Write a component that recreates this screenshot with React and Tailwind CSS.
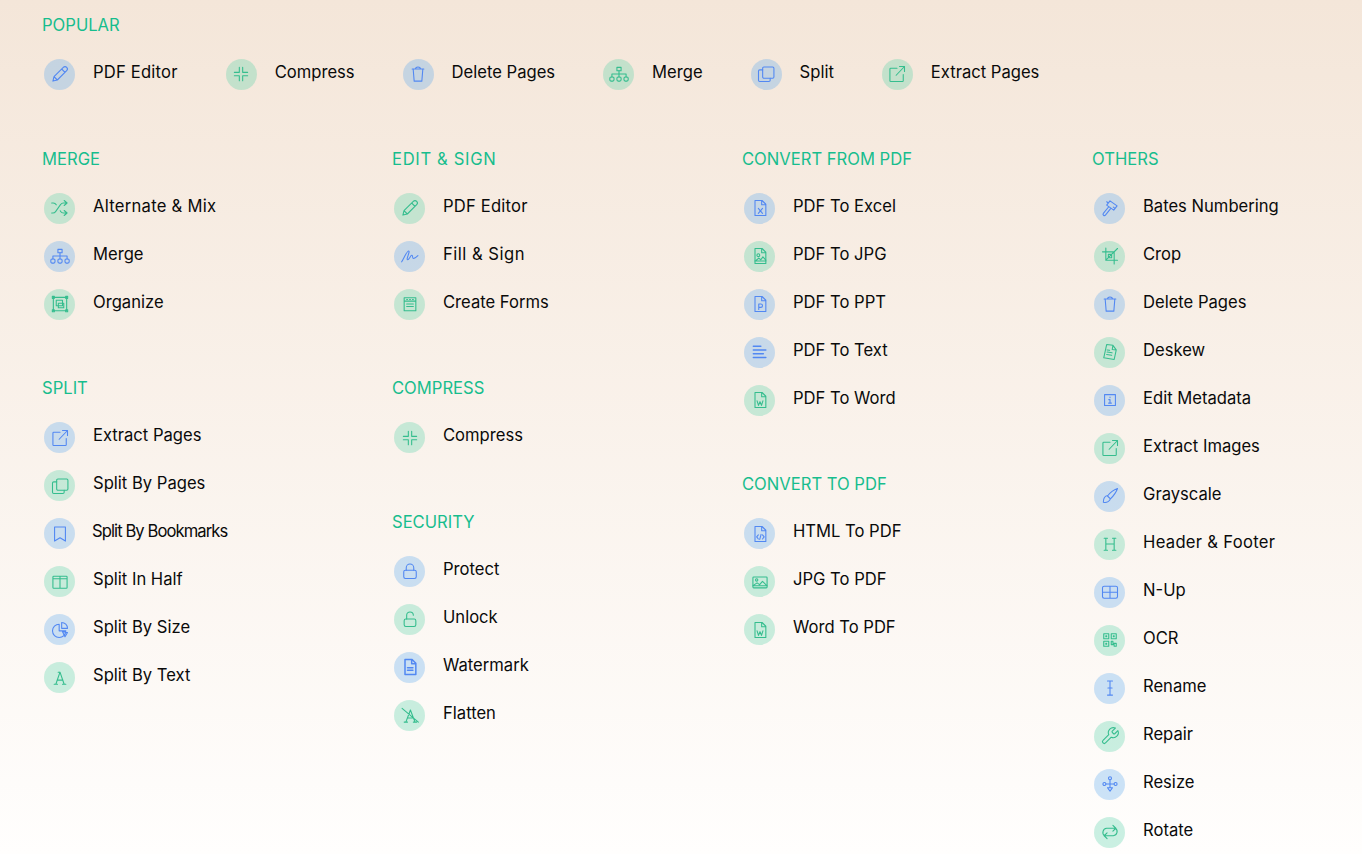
import React from "react";

const doc = "M6 3h8.500L19 7.500V21H6z M14 3v5h5";
const P = {
  pencil: <path d="M3.500 20.500 4.800 15.200 16 4a2.500 2.500 0 0 1 4 4L8.800 19.200z M14 6l4 4 M4.800 15.200 8.800 19.200" />,
  compress: <path d="M10 4v6H4 M14 4v6h6 M10 20v-6H4 M14 20v-6h6" />,
  trash: <path d="M5 6h14 M9 6c0-1.500.5-2.500 3-2.500S15 4.500 15 6 M6.200 6l1.200 14.500h9.200L17.800 6" />,
  tree: <><rect x="9.500" y="4" width="5" height="4" /><path d="M12 8v7.500 M3.500 15.500V12h17v3.500" /><rect x="1" y="15.500" width="5" height="5" rx="1.500" /><rect x="9.500" y="15.500" width="5" height="5" rx="1.500" /><rect x="18" y="15.500" width="5" height="5" rx="1.500" /></>,
  copy: <><rect x="8" y="3.500" width="13.500" height="13.500" rx="1.500" /><path d="M8 7H4.500A1.500 1.500 0 0 0 3 8.500v11A1.500 1.500 0 0 0 4.500 21h11a1.500 1.500 0 0 0 1.500-1.500V17" /></>,
  extract: <path d="M12 5H4.500a1 1 0 0 0-1 1v14a1 1 0 0 0 1 1h14a1 1 0 0 0 1-1v-7.500 M11 13.500 21 3 M15 3h6v6" />,
  shuffle: <path d="M2 18h1.400c1.300 0 2.500-.6 3.300-1.700l6.100-8.600c.7-1.100 2-1.700 3.300-1.700H20 M17 3l3.500 3L17 9 M2 6h1.900c1.500 0 2.900.9 3.600 2.200 M20 18h-3.900c-1.300 0-2.600-.7-3.300-1.800l-.5-.8 M17 15l3.500 3-3.500 3" />,
  organize: <><rect x="4" y="4" width="16" height="16" /><rect x="7.500" y="7.500" width="7.500" height="6.500" /><rect x="10" y="11" width="6.500" height="5.500" /><rect x="2.800" y="2.800" width="2.400" height="2.400" /><rect x="18.800" y="2.800" width="2.400" height="2.400" /><rect x="2.800" y="18.800" width="2.400" height="2.400" /><rect x="18.800" y="18.800" width="2.400" height="2.400" /></>,
  bookmark: <path d="M5.500 3.500h13v17l-6.500-4-6.500 4z" />,
  half: <path d="M4.500 5h15a1 1 0 0 1 1 1v12.500a1 1 0 0 1-1 1h-15a1 1 0 0 1-1-1V6a1 1 0 0 1 1-1z M3.500 8h17 M12 5v14.500" />,
  pie: <path d="M11 5a8 8 0 1 0 8 8h-8z M14 3a7 7 0 0 1 7 7h-7z M15 14l6 1-3 5z" />,
  letterA: <path d="M7 19.500 12 5l5 14.500 M8.500 14.500h7 M5 19.500h4 M15 19.500h4 M9.800 5H12" />,
  sign: <path d="M2 19C5 14 8.500 5.500 10.500 6c2 .5-3.500 10-1.500 10.500 2 .4 3.500-5.500 5.200-5.300 1.600.2.300 3.800 2 3.800 1.500 0 3.200-1.500 5.300-3.500" />,
  forms: <path d="M5 4.500h14v15.500H5z M5 8.500h14 M8 12h8 M8 15h8 M8 6.500h1 M11.500 6.500h1 M15 6.500h1" />,
  lock: <><rect x="4.500" y="11" width="15" height="10" rx="2" /><path d="M7.500 11V8a4.500 4.500 0 0 1 9 0v3" /></>,
  unlock: <><rect x="5" y="12" width="14" height="9" rx="2" /><path d="M8 12V7.500a4 4 0 0 1 8 0" /></>,
  watermark: <path d={doc + " M9 13h6.500 M9 16h6.500"} strokeWidth="1.800" />,
  flatten: <path d="M7 20.500 12.500 6 18 20.500 M9 15.500h7.500 M5 20.500h4 M16 20.500h4 M2.500 4 22 20.500" />,
  excel: <path d={doc + " M10 12.500l5 6 M15 12.500l-5 6"} />,
  jpgdoc: <><path d={doc} /><circle cx="10" cy="11" r="1.700" /><path d="M6.500 18l4-3.500 2.500 2 2.500-3.500 3.500 4 M6 18h13" /></>,
  ppt: <path d={doc + " M10.500 18.500v-6.500h2.500a2 2 0 0 1 0 4h-2.500"} />,
  text: <path d="M4 5h9 M4 9.500h15 M4 14h12 M4 18.500h15" strokeWidth="1.800" />,
  word: <path d={doc + " M8.500 13l1.700 5.500 1.800-4.500 1.800 4.500 1.700-5.500"} />,
  html: <path d={doc + " M10 13l-2 2.500 2 2.500 M15 13l2 2.500-2 2.500 M13.300 12.500l-1.600 6"} />,
  picture: <><rect x="3.500" y="6" width="17" height="13" rx="1" /><circle cx="8" cy="9.500" r="1.400" /><path d="M4 16l4.500-3 3 2.200 3.500-4 5 4.800 M3.500 16.500h17" /></>,
  stamp: <path d="M12 3.500l8.500 6-4 5-8.500-6z M10.500 10.500 4 18.500a1.500 1.500 0 0 0 2.500 2l6-7.500 M8 4.500l2 1.500 M16 11l2 1.500" />,
  crop: <path d="M7 2.500V17h14 M3 7h14v14.500 M21 3 7 17 M10 10h4v4h-4z" />,
  deskew: <path d="M8 3l7.500 1 4 5.500L17 21 4.500 19z M15.500 4l-.8 5 4.800.5 M8.500 12l6 1 M8 15l6 1 M8.500 9.500l3 .5" />,
  info: <path d="M5.500 5.500h13v13h-13z M12 8.500v.6 M10.500 11.500H12v4 M10.300 15.700h3.400" />,
  brush: <path d="M21 3c-4.500 1.500-9 5-12 9l3.500 3.500c3.500-3.500 7-8 8.500-12.500z M9.300 11.500C6 12 4 15 4 19.500 8.500 20.500 12 18 12.500 15" />,
  header: <path d="M7 5v14.500 M17 5v14.500 M7 12h10 M5 5h4 M15 5h4 M5 19.500h4 M15 19.500h4" />,
  grid: <path d="M5 5h14a2 2 0 0 1 2 2v10.500a2 2 0 0 1-2 2H5a2 2 0 0 1-2-2V7a2 2 0 0 1 2-2z M3 12.200h18 M12 5v14.500" />,
  qr: <><rect x="4.500" y="4.500" width="6" height="6" /><rect x="13.500" y="4.500" width="6" height="6" /><rect x="4.500" y="13.500" width="6" height="6" /><path d="M7 7h1v1H7z M16 7h1v1h-1z M7 16h1v1H7z M13.500 13.500h2v2.500h4v3.500h-2.500v-2h-3.500z" /></>,
  rename: <path d="M9 3.500h6 M12 3.500v17 M9 20.500h6 M9.500 12h5" />,
  wrench: <path d="M14.700 6.300a1 1 0 0 0 0 1.400l1.600 1.600a1 1 0 0 0 1.400 0l3.770-3.770a6 6 0 0 1-7.940 7.940l-6.910 6.910a2.120 2.120 0 0 1-3-3l6.910-6.910a6 6 0 0 1 7.940-7.940l-3.760 3.760z" />,
  move: <><circle cx="12" cy="5" r="1.800" /><circle cx="5.300" cy="12" r="1.800" /><circle cx="18.700" cy="12" r="1.800" /><path d="M12 6.800v9.700 M7.100 12h9.800 M9 16.500h6L12 20.500z" /></>,
  rotate: <path d="M5.500 16.500A5 5 0 0 1 8 7.500h11 M15.500 4l3.500 3.500-3.500 3.500 M18.500 7.500A5 5 0 0 1 16 16.500H5 M8.500 13 5 16.500 8.500 20" />,
};

const spacing = {
  "PDF Editor": "ml-[18px] tracking-[0.2px]",
  "Alternate & Mix": "ml-[18px] tracking-[0.27px]",
  "Fill & Sign": "ml-[18px] tracking-[0.5px]",
  "Header & Footer": "ml-[18px] tracking-[0.3px]",
  "Split By Bookmarks": "ml-[17px] tracking-[-0.92px]",
};

function Tool({ name, icon, tone }) {
  const blue = tone === "b";
  return (
    <div className="flex h-12 shrink-0 items-center">
      <div className={`ml-[2px] flex h-[31px] w-[31px] shrink-0 items-center justify-center rounded-full ${blue ? "bg-[#57a7f04d] text-[#5288f2]" : "bg-[#51cfa74d] text-[#35bd8e]"}`}>
        <svg width="20" height="20" viewBox="0 0 24 24" fill="none" stroke="currentColor" strokeWidth="1.300" strokeLinecap="round" strokeLinejoin="round">
          {P[icon]}
        </svg>
      </div>
      <span className={`pb-[5px] text-[16.6px] leading-6 text-[#0a0a0a] ${spacing[name] || "ml-[18px]"}`}>{name}</span>
    </div>
  );
}

function Section({ title, items }) {
  return (
    <section className="mb-[51px]">
      <h2 className={`mb-[15.5px] h-[19px] text-[16.6px] leading-[19.8px] font-normal text-[#17bd8d] ${title === "EDIT & SIGN" ? "tracking-[0.66px]" : ""}`}>{title}</h2>
      {items.map(([name, icon, tone]) => (
        <Tool key={name} name={name} icon={icon} tone={tone} />
      ))}
    </section>
  );
}

const columns = [
  [
    ["MERGE", [["Alternate & Mix", "shuffle", "g"], ["Merge", "tree", "b"], ["Organize", "organize", "g"]]],
    ["SPLIT", [["Extract Pages", "extract", "b"], ["Split By Pages", "copy", "g"], ["Split By Bookmarks", "bookmark", "b"], ["Split In Half", "half", "g"], ["Split By Size", "pie", "b"], ["Split By Text", "letterA", "g"]]],
  ],
  [
    ["EDIT & SIGN", [["PDF Editor", "pencil", "g"], ["Fill & Sign", "sign", "b"], ["Create Forms", "forms", "g"]]],
    ["COMPRESS", [["Compress", "compress", "g"]]],
    ["SECURITY", [["Protect", "lock", "b"], ["Unlock", "unlock", "g"], ["Watermark", "watermark", "b"], ["Flatten", "flatten", "g"]]],
  ],
  [
    ["CONVERT FROM PDF", [["PDF To Excel", "excel", "b"], ["PDF To JPG", "jpgdoc", "g"], ["PDF To PPT", "ppt", "b"], ["PDF To Text", "text", "b"], ["PDF To Word", "word", "g"]]],
    ["CONVERT TO PDF", [["HTML To PDF", "html", "b"], ["JPG To PDF", "picture", "g"], ["Word To PDF", "word", "g"]]],
  ],
  [
    ["OTHERS", [["Bates Numbering", "stamp", "b"], ["Crop", "crop", "g"], ["Delete Pages", "trash", "b"], ["Deskew", "deskew", "g"], ["Edit Metadata", "info", "b"], ["Extract Images", "extract", "g"], ["Grayscale", "brush", "b"], ["Header & Footer", "header", "g"], ["N-Up", "grid", "b"], ["OCR", "qr", "g"], ["Rename", "rename", "b"], ["Repair", "wrench", "g"], ["Resize", "move", "b"], ["Rotate", "rotate", "g"]]],
  ],
];

const popular = [["PDF Editor", "pencil", "b"], ["Compress", "compress", "g"], ["Delete Pages", "trash", "b"], ["Merge", "tree", "g"], ["Split", "copy", "b"], ["Extract Pages", "extract", "g"]];

export default function App() {
  return (
    <div className="h-[854px] overflow-hidden bg-gradient-to-b from-[#f4e6d9] to-[#fffefd] pt-[15.5px] pl-[42px] font-['Inter',sans-serif]">
      <section className="mb-[51.75px]">
        <h2 className="mb-[15.5px] h-[19px] text-[16.6px] leading-[19px] font-normal text-[#17bd8d]">POPULAR</h2>
        <div className="flex gap-[46px]">
          {popular.map(([name, icon, tone]) => (
            <Tool key={name} name={name} icon={icon} tone={tone} />
          ))}
        </div>
      </section>
      <div className="grid grid-cols-[350px_350px_350px_270px]">
        {columns.map((sections, i) => (
          <div key={i}>
            {sections.map(([title, items]) => (
              <Section key={title} title={title} items={items} />
            ))}
          </div>
        ))}
      </div>
    </div>
  );
}
